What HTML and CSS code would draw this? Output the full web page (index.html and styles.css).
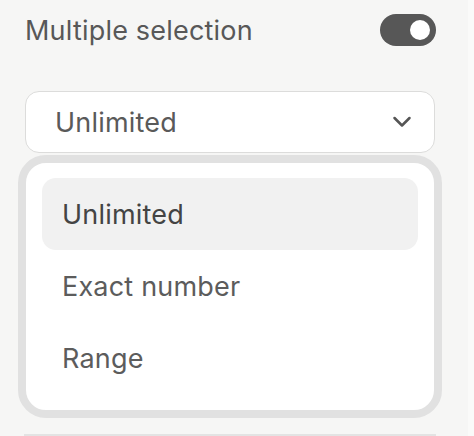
FILE: index.html
```html
<!DOCTYPE html>
<html>
<head>
<meta charset="utf-8">
<link rel="stylesheet" href="styles.css">
</head>
<body>
<div class="page">
  <div class="panel">
    <div class="row">
      <span class="label">Multiple selection</span>
      <span class="toggle"><span class="knob"></span></span>
    </div>
    <div class="select">
      <span class="value">Unlimited</span>
      <svg class="chev" width="20" height="12" viewBox="0 0 20 12"><path d="M2.5 2 L10 9.5 L17.5 2" fill="none" stroke="#555" stroke-width="2.5" stroke-linecap="round" stroke-linejoin="round"/></svg>
    </div>
    <div class="menu">
      <div class="menu-inner">
        <div class="item active">Unlimited</div>
        <div class="item">Exact number</div>
        <div class="item">Range</div>
      </div>
    </div>
    <div class="next"></div>
  </div>
  <div class="gutter"></div>
</div>
</body>
</html>
```

FILE: styles.css
```css
html, body {
  margin: 0;
  padding: 0;
  height: 100%;
}
body {
  font-family: Inter, "Noto Sans", sans-serif;
  background: #f6f6f5;
  overflow: hidden;
}
.page {
  display: flex;
  height: 436px;
}
.panel {
  width: 468px;
  background: #f6f6f5;
  display: flex;
  flex-direction: column;
}
.gutter {
  flex: 1;
  background: #fafaf9;
}
.row {
  display: flex;
  align-items: center;
  justify-content: space-between;
  height: 32px;
  margin: 14px 32px 0 25px;
}
.label {
  font-size: 27px;
  letter-spacing: 0.2px;
  color: #585858;
}
.toggle {
  width: 56px;
  height: 32px;
  border-radius: 16px;
  background: #575757;
  display: flex;
  align-items: center;
  justify-content: flex-end;
  padding-right: 6px;
  box-sizing: border-box;
}
.knob {
  width: 20px;
  height: 20px;
  border-radius: 50%;
  background: #fff;
}
.select {
  margin: 45px 33px 0 25px;
  height: 62px;
  box-sizing: border-box;
  border: 1.5px solid #dcdcdb;
  border-radius: 14px;
  background: #fff;
  display: flex;
  align-items: center;
  justify-content: space-between;
  padding: 0 22px 0 29px;
}
.value {
  font-size: 27px;
  letter-spacing: 0.2px;
  color: #5a5a5a;
}
.menu {
  margin: 2px 26px 0 18px;
  border: 8px solid #e1e1e1;
  border-radius: 28px;
  background: #fff;
}
.menu-inner {
  padding: 15px 16px 16px 16px;
  display: flex;
  flex-direction: column;
}
.item {
  height: 72px;
  display: flex;
  align-items: center;
  padding-left: 20px;
  font-size: 27px;
  letter-spacing: 0.2px;
  color: #5c5c5c;
  border-radius: 14px;
}
.item.active {
  background: #f1f1f1;
  color: #444;
}
.next {
  margin: 16px 32px 0 24px;
  height: 2px;
  background: #e3e3e3;
}
```
